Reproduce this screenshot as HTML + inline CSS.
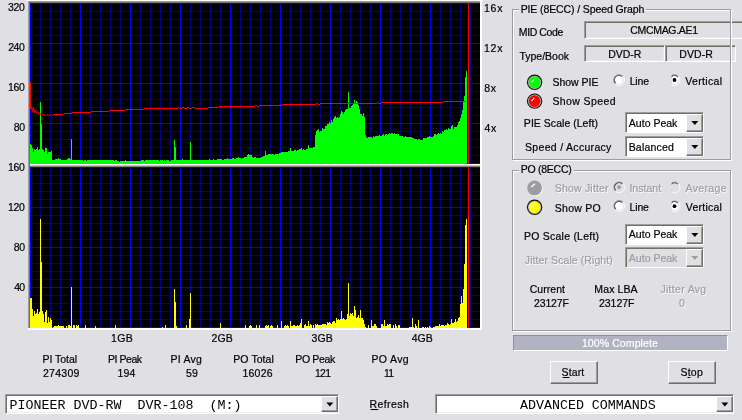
<!DOCTYPE html>
<html><head><meta charset="utf-8"><title>PIE / PO Scan</title>
<style>
html,body{margin:0;padding:0}
body{width:742px;height:420px;overflow:hidden;background:#E0DFE3;position:relative;font-family:"Liberation Sans",sans-serif;font-size:10px;color:#000}
.t{position:absolute;white-space:pre;line-height:12px;font-size:10.5px;-webkit-text-stroke-width:0.2px}
.t.m{font-family:"Liberation Mono",monospace;font-size:13.33px;line-height:16px;-webkit-text-stroke-width:0}
.t.d{color:#9D9DA1;text-shadow:0.8px 0.8px 0 #FFFFFF}
.t.d2{color:#9D9DA1}
.sk{position:absolute;box-sizing:border-box;border-style:solid;border-width:1px;border-color:#9D9DA1 #FFFFFF #FFFFFF #9D9DA1;box-shadow:inset 1px 1px 0 #716F64, inset -1px -1px 0 #E9E8EC}
.sk2{position:absolute;box-sizing:border-box;border-style:solid;border-width:1px;border-color:#9D9DA1 #FFFFFF #FFFFFF #9D9DA1;box-shadow:inset 1px 1px 0 #716F64}
.btn{position:absolute;box-sizing:border-box;background:#E0DFE3;border-style:solid;border-width:1px;border-color:#FFFFFF #716F64 #716F64 #FFFFFF;box-shadow:inset -1px -1px 0 #9D9DA1}
.pbtn{position:absolute;box-sizing:border-box;background:#E0DFE3;border-style:solid;border-width:1px;border-color:#FFFFFF #716F64 #716F64 #FFFFFF;box-shadow:inset -1px -1px 0 #9D9DA1}
.grp{position:absolute;box-sizing:border-box;border:1px solid #9D9DA1;box-shadow:1px 1px 0 #FFFFFF, inset 1px 1px 0 #FFFFFF}
</style></head><body>
<svg width="742" height="420" viewBox="0 0 742 420" style="position:absolute;left:0;top:0">
<g shape-rendering="crispEdges">
<rect x="26" y="0" width="457" height="1" fill="#FFFFFF"/>
<rect x="28" y="1" width="454" height="329" fill="#9D9DA1"/>
<rect x="29" y="2" width="453" height="328" fill="#716F64"/>
<rect x="30" y="1" width="452" height="329" fill="none"/>
<rect x="480" y="1" width="2" height="329" fill="#FFFFFF"/>
<rect x="28" y="328" width="454" height="2" fill="#FFFFFF"/>
<rect x="30" y="3" width="450" height="325" fill="#000000"/>
<rect x="30" y="3" width="1" height="161" fill="#0000FF"/><rect x="30" y="167" width="1" height="161" fill="#0000FF"/><rect x="40" y="3" width="1" height="161" fill="#00008C"/><rect x="40" y="167" width="1" height="161" fill="#00008C"/><rect x="50" y="3" width="1" height="161" fill="#00008C"/><rect x="50" y="167" width="1" height="161" fill="#00008C"/><rect x="60" y="3" width="1" height="161" fill="#00008C"/><rect x="60" y="167" width="1" height="161" fill="#00008C"/><rect x="70" y="3" width="1" height="161" fill="#00008C"/><rect x="70" y="167" width="1" height="161" fill="#00008C"/><rect x="80" y="3" width="1" height="161" fill="#0000FF"/><rect x="80" y="167" width="1" height="161" fill="#0000FF"/><rect x="90" y="3" width="1" height="161" fill="#00008C"/><rect x="90" y="167" width="1" height="161" fill="#00008C"/><rect x="100" y="3" width="1" height="161" fill="#00008C"/><rect x="100" y="167" width="1" height="161" fill="#00008C"/><rect x="110" y="3" width="1" height="161" fill="#00008C"/><rect x="110" y="167" width="1" height="161" fill="#00008C"/><rect x="120" y="3" width="1" height="161" fill="#00008C"/><rect x="120" y="167" width="1" height="161" fill="#00008C"/><rect x="130" y="3" width="1" height="161" fill="#0000FF"/><rect x="130" y="167" width="1" height="161" fill="#0000FF"/><rect x="140" y="3" width="1" height="161" fill="#00008C"/><rect x="140" y="167" width="1" height="161" fill="#00008C"/><rect x="150" y="3" width="1" height="161" fill="#00008C"/><rect x="150" y="167" width="1" height="161" fill="#00008C"/><rect x="160" y="3" width="1" height="161" fill="#00008C"/><rect x="160" y="167" width="1" height="161" fill="#00008C"/><rect x="170" y="3" width="1" height="161" fill="#00008C"/><rect x="170" y="167" width="1" height="161" fill="#00008C"/><rect x="180" y="3" width="1" height="161" fill="#0000FF"/><rect x="180" y="167" width="1" height="161" fill="#0000FF"/><rect x="190" y="3" width="1" height="161" fill="#00008C"/><rect x="190" y="167" width="1" height="161" fill="#00008C"/><rect x="200" y="3" width="1" height="161" fill="#00008C"/><rect x="200" y="167" width="1" height="161" fill="#00008C"/><rect x="210" y="3" width="1" height="161" fill="#00008C"/><rect x="210" y="167" width="1" height="161" fill="#00008C"/><rect x="220" y="3" width="1" height="161" fill="#00008C"/><rect x="220" y="167" width="1" height="161" fill="#00008C"/><rect x="230" y="3" width="1" height="161" fill="#0000FF"/><rect x="230" y="167" width="1" height="161" fill="#0000FF"/><rect x="240" y="3" width="1" height="161" fill="#00008C"/><rect x="240" y="167" width="1" height="161" fill="#00008C"/><rect x="250" y="3" width="1" height="161" fill="#00008C"/><rect x="250" y="167" width="1" height="161" fill="#00008C"/><rect x="260" y="3" width="1" height="161" fill="#00008C"/><rect x="260" y="167" width="1" height="161" fill="#00008C"/><rect x="270" y="3" width="1" height="161" fill="#00008C"/><rect x="270" y="167" width="1" height="161" fill="#00008C"/><rect x="280" y="3" width="1" height="161" fill="#0000FF"/><rect x="280" y="167" width="1" height="161" fill="#0000FF"/><rect x="290" y="3" width="1" height="161" fill="#00008C"/><rect x="290" y="167" width="1" height="161" fill="#00008C"/><rect x="300" y="3" width="1" height="161" fill="#00008C"/><rect x="300" y="167" width="1" height="161" fill="#00008C"/><rect x="310" y="3" width="1" height="161" fill="#00008C"/><rect x="310" y="167" width="1" height="161" fill="#00008C"/><rect x="320" y="3" width="1" height="161" fill="#00008C"/><rect x="320" y="167" width="1" height="161" fill="#00008C"/><rect x="330" y="3" width="1" height="161" fill="#0000FF"/><rect x="330" y="167" width="1" height="161" fill="#0000FF"/><rect x="340" y="3" width="1" height="161" fill="#00008C"/><rect x="340" y="167" width="1" height="161" fill="#00008C"/><rect x="350" y="3" width="1" height="161" fill="#00008C"/><rect x="350" y="167" width="1" height="161" fill="#00008C"/><rect x="360" y="3" width="1" height="161" fill="#00008C"/><rect x="360" y="167" width="1" height="161" fill="#00008C"/><rect x="370" y="3" width="1" height="161" fill="#00008C"/><rect x="370" y="167" width="1" height="161" fill="#00008C"/><rect x="380" y="3" width="1" height="161" fill="#0000FF"/><rect x="380" y="167" width="1" height="161" fill="#0000FF"/><rect x="390" y="3" width="1" height="161" fill="#00008C"/><rect x="390" y="167" width="1" height="161" fill="#00008C"/><rect x="400" y="3" width="1" height="161" fill="#00008C"/><rect x="400" y="167" width="1" height="161" fill="#00008C"/><rect x="410" y="3" width="1" height="161" fill="#00008C"/><rect x="410" y="167" width="1" height="161" fill="#00008C"/><rect x="420" y="3" width="1" height="161" fill="#00008C"/><rect x="420" y="167" width="1" height="161" fill="#00008C"/><rect x="430" y="3" width="1" height="161" fill="#0000FF"/><rect x="430" y="167" width="1" height="161" fill="#0000FF"/><rect x="440" y="3" width="1" height="161" fill="#00008C"/><rect x="440" y="167" width="1" height="161" fill="#00008C"/><rect x="450" y="3" width="1" height="161" fill="#00008C"/><rect x="450" y="167" width="1" height="161" fill="#00008C"/><rect x="460" y="3" width="1" height="161" fill="#00008C"/><rect x="460" y="167" width="1" height="161" fill="#00008C"/><rect x="470" y="3" width="1" height="161" fill="#00008C"/><rect x="470" y="167" width="1" height="161" fill="#00008C"/><rect x="30" y="3" width="450" height="1" fill="#0000FF"/><rect x="30" y="167" width="450" height="1" fill="#0000FF"/><rect x="30" y="11" width="450" height="1" fill="#00008C"/><rect x="30" y="175" width="450" height="1" fill="#00008C"/><rect x="30" y="19" width="450" height="1" fill="#00008C"/><rect x="30" y="183" width="450" height="1" fill="#00008C"/><rect x="30" y="27" width="450" height="1" fill="#00008C"/><rect x="30" y="191" width="450" height="1" fill="#00008C"/><rect x="30" y="35" width="450" height="1" fill="#00008C"/><rect x="30" y="199" width="450" height="1" fill="#00008C"/><rect x="30" y="43" width="450" height="1" fill="#0000FF"/><rect x="30" y="207" width="450" height="1" fill="#0000FF"/><rect x="30" y="51" width="450" height="1" fill="#00008C"/><rect x="30" y="215" width="450" height="1" fill="#00008C"/><rect x="30" y="59" width="450" height="1" fill="#00008C"/><rect x="30" y="223" width="450" height="1" fill="#00008C"/><rect x="30" y="67" width="450" height="1" fill="#00008C"/><rect x="30" y="231" width="450" height="1" fill="#00008C"/><rect x="30" y="75" width="450" height="1" fill="#00008C"/><rect x="30" y="239" width="450" height="1" fill="#00008C"/><rect x="30" y="83" width="450" height="1" fill="#0000FF"/><rect x="30" y="247" width="450" height="1" fill="#0000FF"/><rect x="30" y="91" width="450" height="1" fill="#00008C"/><rect x="30" y="255" width="450" height="1" fill="#00008C"/><rect x="30" y="99" width="450" height="1" fill="#00008C"/><rect x="30" y="263" width="450" height="1" fill="#00008C"/><rect x="30" y="107" width="450" height="1" fill="#00008C"/><rect x="30" y="271" width="450" height="1" fill="#00008C"/><rect x="30" y="115" width="450" height="1" fill="#00008C"/><rect x="30" y="279" width="450" height="1" fill="#00008C"/><rect x="30" y="123" width="450" height="1" fill="#0000FF"/><rect x="30" y="287" width="450" height="1" fill="#0000FF"/><rect x="30" y="131" width="450" height="1" fill="#00008C"/><rect x="30" y="295" width="450" height="1" fill="#00008C"/><rect x="30" y="139" width="450" height="1" fill="#00008C"/><rect x="30" y="303" width="450" height="1" fill="#00008C"/><rect x="30" y="147" width="450" height="1" fill="#00008C"/><rect x="30" y="311" width="450" height="1" fill="#00008C"/><rect x="30" y="155" width="450" height="1" fill="#00008C"/><rect x="30" y="319" width="450" height="1" fill="#00008C"/><rect x="30" y="163" width="450" height="1" fill="#0000FF"/><rect x="30" y="327" width="450" height="1" fill="#0000FF"/><rect x="30" y="3" width="1" height="161" fill="#0000FF"/><rect x="30" y="167" width="1" height="161" fill="#0000FF"/><rect x="80" y="3" width="1" height="161" fill="#0000FF"/><rect x="80" y="167" width="1" height="161" fill="#0000FF"/><rect x="130" y="3" width="1" height="161" fill="#0000FF"/><rect x="130" y="167" width="1" height="161" fill="#0000FF"/><rect x="180" y="3" width="1" height="161" fill="#0000FF"/><rect x="180" y="167" width="1" height="161" fill="#0000FF"/><rect x="230" y="3" width="1" height="161" fill="#0000FF"/><rect x="230" y="167" width="1" height="161" fill="#0000FF"/><rect x="280" y="3" width="1" height="161" fill="#0000FF"/><rect x="280" y="167" width="1" height="161" fill="#0000FF"/><rect x="330" y="3" width="1" height="161" fill="#0000FF"/><rect x="330" y="167" width="1" height="161" fill="#0000FF"/><rect x="380" y="3" width="1" height="161" fill="#0000FF"/><rect x="380" y="167" width="1" height="161" fill="#0000FF"/><rect x="430" y="3" width="1" height="161" fill="#0000FF"/><rect x="430" y="167" width="1" height="161" fill="#0000FF"/>
<path d="M30 144h1V164h-1zM31 145h1V164h-1zM32 148h1V164h-1zM33 152h1V164h-1zM34 149h1V164h-1zM35 150h1V164h-1zM36 149h1V164h-1zM37 147h1V164h-1zM38 150h1V164h-1zM39 149h1V164h-1zM40 102h1V164h-1zM41 124h1V164h-1zM42 149h1V164h-1zM43 150h1V164h-1zM44 152h1V164h-1zM45 148h1V164h-1zM46 148h1V164h-1zM47 154h1V164h-1zM48 152h1V164h-1zM49 152h1V164h-1zM50 152h1V164h-1zM51 151h1V164h-1zM52 160h1V164h-1zM53 160h1V164h-1zM54 160h1V164h-1zM55 159h1V164h-1zM56 159h1V164h-1zM57 159h1V164h-1zM58 158h1V164h-1zM59 159h1V164h-1zM60 159h1V164h-1zM61 160h1V164h-1zM62 160h1V164h-1zM63 160h1V164h-1zM64 160h1V164h-1zM65 160h1V164h-1zM66 160h1V164h-1zM67 159h1V164h-1zM68 158h1V164h-1zM69 158h1V164h-1zM70 159h1V164h-1zM71 139h1V164h-1zM72 160h1V164h-1zM73 160h1V164h-1zM74 160h1V164h-1zM75 160h1V164h-1zM76 160h1V164h-1zM77 160h1V164h-1zM78 160h1V164h-1zM79 160h1V164h-1zM80 160h1V164h-1zM81 160h1V164h-1zM82 160h1V164h-1zM83 161h1V164h-1zM84 160h1V164h-1zM85 160h1V164h-1zM86 161h1V164h-1zM87 160h1V164h-1zM88 160h1V164h-1zM89 160h1V164h-1zM90 160h1V164h-1zM91 160h1V164h-1zM92 160h1V164h-1zM93 160h1V164h-1zM94 160h1V164h-1zM95 160h1V164h-1zM96 160h1V164h-1zM97 160h1V164h-1zM98 160h1V164h-1zM99 160h1V164h-1zM100 160h1V164h-1zM101 160h1V164h-1zM102 160h1V164h-1zM103 160h1V164h-1zM104 160h1V164h-1zM105 160h1V164h-1zM106 160h1V164h-1zM107 160h1V164h-1zM108 160h1V164h-1zM109 160h1V164h-1zM110 160h1V164h-1zM111 160h1V164h-1zM112 160h1V164h-1zM113 160h1V164h-1zM114 161h1V164h-1zM115 160h1V164h-1zM116 160h1V164h-1zM117 161h1V164h-1zM118 161h1V164h-1zM119 162h1V164h-1zM120 161h1V164h-1zM121 161h1V164h-1zM122 161h1V164h-1zM123 161h1V164h-1zM124 161h1V164h-1zM125 160h1V164h-1zM126 161h1V164h-1zM127 161h1V164h-1zM128 161h1V164h-1zM129 161h1V164h-1zM130 161h1V164h-1zM131 161h1V164h-1zM132 161h1V164h-1zM133 161h1V164h-1zM134 161h1V164h-1zM135 161h1V164h-1zM136 161h1V164h-1zM137 161h1V164h-1zM138 161h1V164h-1zM139 161h1V164h-1zM140 161h1V164h-1zM141 160h1V164h-1zM142 160h1V164h-1zM143 160h1V164h-1zM144 161h1V164h-1zM145 160h1V164h-1zM146 160h1V164h-1zM147 160h1V164h-1zM148 160h1V164h-1zM149 160h1V164h-1zM150 160h1V164h-1zM151 160h1V164h-1zM152 160h1V164h-1zM153 160h1V164h-1zM154 160h1V164h-1zM155 160h1V164h-1zM156 160h1V164h-1zM157 160h1V164h-1zM158 160h1V164h-1zM159 161h1V164h-1zM160 160h1V164h-1zM161 160h1V164h-1zM162 160h1V164h-1zM163 161h1V164h-1zM164 160h1V164h-1zM165 161h1V164h-1zM166 160h1V164h-1zM167 160h1V164h-1zM168 160h1V164h-1zM169 161h1V164h-1zM170 161h1V164h-1zM171 160h1V164h-1zM172 160h1V164h-1zM173 160h1V164h-1zM174 140h1V164h-1zM175 147h1V164h-1zM176 160h1V164h-1zM177 160h1V164h-1zM178 160h1V164h-1zM179 160h1V164h-1zM180 160h1V164h-1zM181 160h1V164h-1zM182 159h1V164h-1zM183 160h1V164h-1zM184 160h1V164h-1zM185 160h1V164h-1zM186 160h1V164h-1zM187 160h1V164h-1zM188 160h1V164h-1zM189 160h1V164h-1zM190 142h1V164h-1zM191 160h1V164h-1zM192 160h1V164h-1zM193 160h1V164h-1zM194 160h1V164h-1zM195 160h1V164h-1zM196 160h1V164h-1zM197 160h1V164h-1zM198 160h1V164h-1zM199 160h1V164h-1zM200 160h1V164h-1zM201 160h1V164h-1zM202 160h1V164h-1zM203 160h1V164h-1zM204 160h1V164h-1zM205 160h1V164h-1zM206 160h1V164h-1zM207 160h1V164h-1zM208 160h1V164h-1zM209 159h1V164h-1zM210 160h1V164h-1zM211 160h1V164h-1zM212 160h1V164h-1zM213 159h1V164h-1zM214 160h1V164h-1zM215 160h1V164h-1zM216 160h1V164h-1zM217 159h1V164h-1zM218 159h1V164h-1zM219 159h1V164h-1zM220 159h1V164h-1zM221 159h1V164h-1zM222 160h1V164h-1zM223 160h1V164h-1zM224 159h1V164h-1zM225 159h1V164h-1zM226 159h1V164h-1zM227 158h1V164h-1zM228 159h1V164h-1zM229 159h1V164h-1zM230 159h1V164h-1zM231 159h1V164h-1zM232 158h1V164h-1zM233 158h1V164h-1zM234 159h1V164h-1zM235 159h1V164h-1zM236 158h1V164h-1zM237 158h1V164h-1zM238 157h1V164h-1zM239 158h1V164h-1zM240 158h1V164h-1zM241 159h1V164h-1zM242 158h1V164h-1zM243 158h1V164h-1zM244 157h1V164h-1zM245 157h1V164h-1zM246 157h1V164h-1zM247 155h1V164h-1zM248 154h1V164h-1zM249 155h1V164h-1zM250 155h1V164h-1zM251 155h1V164h-1zM252 157h1V164h-1zM253 158h1V164h-1zM254 157h1V164h-1zM255 157h1V164h-1zM256 158h1V164h-1zM257 158h1V164h-1zM258 158h1V164h-1zM259 158h1V164h-1zM260 158h1V164h-1zM261 157h1V164h-1zM262 157h1V164h-1zM263 156h1V164h-1zM264 156h1V164h-1zM265 151h1V164h-1zM266 155h1V164h-1zM267 155h1V164h-1zM268 154h1V164h-1zM269 154h1V164h-1zM270 154h1V164h-1zM271 154h1V164h-1zM272 154h1V164h-1zM273 154h1V164h-1zM274 155h1V164h-1zM275 154h1V164h-1zM276 154h1V164h-1zM277 154h1V164h-1zM278 154h1V164h-1zM279 153h1V164h-1zM280 153h1V164h-1zM281 152h1V164h-1zM282 152h1V164h-1zM283 152h1V164h-1zM284 152h1V164h-1zM285 152h1V164h-1zM286 152h1V164h-1zM287 152h1V164h-1zM288 151h1V164h-1zM289 151h1V164h-1zM290 148h1V164h-1zM291 151h1V164h-1zM292 151h1V164h-1zM293 151h1V164h-1zM294 150h1V164h-1zM295 150h1V164h-1zM296 151h1V164h-1zM297 150h1V164h-1zM298 150h1V164h-1zM299 149h1V164h-1zM300 149h1V164h-1zM301 148h1V164h-1zM302 150h1V164h-1zM303 149h1V164h-1zM304 150h1V164h-1zM305 150h1V164h-1zM306 149h1V164h-1zM307 149h1V164h-1zM308 145h1V164h-1zM309 148h1V164h-1zM310 148h1V164h-1zM311 148h1V164h-1zM312 148h1V164h-1zM313 147h1V164h-1zM314 147h1V164h-1zM315 135h1V164h-1zM316 131h1V164h-1zM317 130h1V164h-1zM318 129h1V164h-1zM319 132h1V164h-1zM320 131h1V164h-1zM321 131h1V164h-1zM322 128h1V164h-1zM323 129h1V164h-1zM324 129h1V164h-1zM325 126h1V164h-1zM326 126h1V164h-1zM327 124h1V164h-1zM328 124h1V164h-1zM329 122h1V164h-1zM330 123h1V164h-1zM331 120h1V164h-1zM332 122h1V164h-1zM333 119h1V164h-1zM334 117h1V164h-1zM335 116h1V164h-1zM336 118h1V164h-1zM337 117h1V164h-1zM338 118h1V164h-1zM339 117h1V164h-1zM340 114h1V164h-1zM341 111h1V164h-1zM342 112h1V164h-1zM343 114h1V164h-1zM344 112h1V164h-1zM345 110h1V164h-1zM346 109h1V164h-1zM347 109h1V164h-1zM348 92h1V164h-1zM349 108h1V164h-1zM350 108h1V164h-1zM351 106h1V164h-1zM352 105h1V164h-1zM353 103h1V164h-1zM354 100h1V164h-1zM355 104h1V164h-1zM356 101h1V164h-1zM357 102h1V164h-1zM358 105h1V164h-1zM359 109h1V164h-1zM360 114h1V164h-1zM361 114h1V164h-1zM362 116h1V164h-1zM363 113h1V164h-1zM364 117h1V164h-1zM365 135h1V164h-1zM366 137h1V164h-1zM367 138h1V164h-1zM368 137h1V164h-1zM369 137h1V164h-1zM370 137h1V164h-1zM371 137h1V164h-1zM372 138h1V164h-1zM373 136h1V164h-1zM374 137h1V164h-1zM375 136h1V164h-1zM376 136h1V164h-1zM377 136h1V164h-1zM378 136h1V164h-1zM379 135h1V164h-1zM380 136h1V164h-1zM381 136h1V164h-1zM382 135h1V164h-1zM383 134h1V164h-1zM384 136h1V164h-1zM385 134h1V164h-1zM386 134h1V164h-1zM387 135h1V164h-1zM388 134h1V164h-1zM389 133h1V164h-1zM390 134h1V164h-1zM391 133h1V164h-1zM392 133h1V164h-1zM393 134h1V164h-1zM394 133h1V164h-1zM395 134h1V164h-1zM396 134h1V164h-1zM397 134h1V164h-1zM398 134h1V164h-1zM399 136h1V164h-1zM400 136h1V164h-1zM401 136h1V164h-1zM402 136h1V164h-1zM403 137h1V164h-1zM404 137h1V164h-1zM405 136h1V164h-1zM406 137h1V164h-1zM407 137h1V164h-1zM408 137h1V164h-1zM409 137h1V164h-1zM410 137h1V164h-1zM411 137h1V164h-1zM412 138h1V164h-1zM413 138h1V164h-1zM414 139h1V164h-1zM415 139h1V164h-1zM416 139h1V164h-1zM417 140h1V164h-1zM418 139h1V164h-1zM419 139h1V164h-1zM420 140h1V164h-1zM421 140h1V164h-1zM422 140h1V164h-1zM423 138h1V164h-1zM424 138h1V164h-1zM425 138h1V164h-1zM426 138h1V164h-1zM427 137h1V164h-1zM428 137h1V164h-1zM429 136h1V164h-1zM430 137h1V164h-1zM431 137h1V164h-1zM432 137h1V164h-1zM433 136h1V164h-1zM434 134h1V164h-1zM435 134h1V164h-1zM436 135h1V164h-1zM437 134h1V164h-1zM438 133h1V164h-1zM439 134h1V164h-1zM440 133h1V164h-1zM441 134h1V164h-1zM442 131h1V164h-1zM443 132h1V164h-1zM444 130h1V164h-1zM445 130h1V164h-1zM446 129h1V164h-1zM447 130h1V164h-1zM448 128h1V164h-1zM449 129h1V164h-1zM450 129h1V164h-1zM451 126h1V164h-1zM452 125h1V164h-1zM453 129h1V164h-1zM454 127h1V164h-1zM455 127h1V164h-1zM456 127h1V164h-1zM457 125h1V164h-1zM458 122h1V164h-1zM459 121h1V164h-1zM460 118h1V164h-1zM461 114h1V164h-1zM462 110h1V164h-1zM463 101h1V164h-1zM464 96h1V164h-1zM465 77h1V164h-1zM466 71h1V164h-1z" fill="#00FF00"/>
<path d="M30 298h1V328h-1zM31 298h1V328h-1zM32 309h1V328h-1zM33 316h1V328h-1zM34 311h1V328h-1zM35 314h1V328h-1zM36 313h1V328h-1zM37 309h1V328h-1zM38 314h1V328h-1zM39 312h1V328h-1zM40 219h1V328h-1zM41 262h1V328h-1zM42 311h1V328h-1zM43 314h1V328h-1zM44 322h1V328h-1zM45 312h1V328h-1zM46 310h1V328h-1zM47 323h1V328h-1zM48 317h1V328h-1zM49 322h1V328h-1zM50 318h1V328h-1zM51 320h1V328h-1zM53 327h1V328h-1zM54 326h1V328h-1zM55 326h1V328h-1zM56 326h1V328h-1zM57 326h1V328h-1zM58 325h1V328h-1zM59 326h1V328h-1zM60 326h1V328h-1zM61 326h1V328h-1zM62 326h1V328h-1zM63 326h1V328h-1zM66 326h1V328h-1zM68 325h1V328h-1zM69 325h1V328h-1zM70 326h1V328h-1zM71 287h1V328h-1zM73 325h1V328h-1zM74 325h1V328h-1zM76 325h1V328h-1zM77 326h1V328h-1zM78 325h1V328h-1zM85 325h1V328h-1zM95 326h1V328h-1zM115 325h1V328h-1zM162 327h1V328h-1zM165 325h1V328h-1zM174 289h1V328h-1zM175 302h1V328h-1zM176 326h1V328h-1zM186 325h1V328h-1zM189 319h1V328h-1zM190 293h1V328h-1zM220 323h1V328h-1zM245 325h1V328h-1zM249 326h1V328h-1zM250 325h1V328h-1zM251 326h1V328h-1zM256 325h1V328h-1zM259 325h1V328h-1zM265 326h1V328h-1zM266 325h1V328h-1zM267 326h1V328h-1zM268 325h1V328h-1zM270 326h1V328h-1zM271 325h1V328h-1zM272 326h1V328h-1zM277 325h1V328h-1zM281 321h1V328h-1zM284 326h1V328h-1zM285 325h1V328h-1zM286 326h1V328h-1zM287 325h1V328h-1zM288 326h1V328h-1zM290 321h1V328h-1zM291 326h1V328h-1zM292 326h1V328h-1zM293 325h1V328h-1zM294 325h1V328h-1zM295 326h1V328h-1zM296 326h1V328h-1zM297 325h1V328h-1zM298 326h1V328h-1zM299 325h1V328h-1zM300 323h1V328h-1zM301 319h1V328h-1zM304 325h1V328h-1zM305 324h1V328h-1zM306 326h1V328h-1zM307 326h1V328h-1zM308 321h1V328h-1zM309 326h1V328h-1zM310 324h1V328h-1zM311 325h1V328h-1zM313 325h1V328h-1zM315 324h1V328h-1zM316 325h1V328h-1zM317 324h1V328h-1zM318 325h1V328h-1zM319 325h1V328h-1zM320 325h1V328h-1zM321 325h1V328h-1zM322 324h1V328h-1zM323 324h1V328h-1zM324 324h1V328h-1zM325 324h1V328h-1zM326 325h1V328h-1zM327 322h1V328h-1zM328 323h1V328h-1zM329 322h1V328h-1zM330 323h1V328h-1zM331 324h1V328h-1zM332 322h1V328h-1zM333 321h1V328h-1zM334 321h1V328h-1zM335 323h1V328h-1zM336 318h1V328h-1zM337 320h1V328h-1zM338 319h1V328h-1zM339 320h1V328h-1zM340 319h1V328h-1zM341 311h1V328h-1zM342 319h1V328h-1zM343 318h1V328h-1zM344 319h1V328h-1zM345 320h1V328h-1zM346 319h1V328h-1zM347 314h1V328h-1zM348 283h1V328h-1zM349 316h1V328h-1zM350 313h1V328h-1zM351 314h1V328h-1zM352 313h1V328h-1zM353 316h1V328h-1zM354 306h1V328h-1zM355 310h1V328h-1zM356 318h1V328h-1zM357 317h1V328h-1zM358 315h1V328h-1zM359 318h1V328h-1zM360 310h1V328h-1zM361 318h1V328h-1zM362 318h1V328h-1zM363 320h1V328h-1zM364 324h1V328h-1zM365 327h1V328h-1zM368 325h1V328h-1zM371 320h1V328h-1zM372 326h1V328h-1zM373 326h1V328h-1zM374 324h1V328h-1zM375 324h1V328h-1zM376 326h1V328h-1zM381 324h1V328h-1zM382 324h1V328h-1zM383 326h1V328h-1zM384 320h1V328h-1zM385 326h1V328h-1zM386 326h1V328h-1zM387 324h1V328h-1zM388 325h1V328h-1zM389 324h1V328h-1zM390 324h1V328h-1zM393 325h1V328h-1zM395 324h1V328h-1zM396 326h1V328h-1zM398 325h1V328h-1zM399 325h1V328h-1zM409 327h1V328h-1zM410 327h1V328h-1zM411 327h1V328h-1zM412 318h1V328h-1zM413 327h1V328h-1zM415 324h1V328h-1zM416 326h1V328h-1zM418 320h1V328h-1zM422 327h1V328h-1zM423 327h1V328h-1zM425 327h1V328h-1zM427 327h1V328h-1zM429 326h1V328h-1zM430 327h1V328h-1zM433 327h1V328h-1zM434 327h1V328h-1zM435 326h1V328h-1zM436 326h1V328h-1zM437 326h1V328h-1zM438 326h1V328h-1zM439 324h1V328h-1zM440 326h1V328h-1zM441 325h1V328h-1zM442 325h1V328h-1zM443 325h1V328h-1zM444 326h1V328h-1zM445 325h1V328h-1zM446 325h1V328h-1zM447 323h1V328h-1zM448 324h1V328h-1zM449 325h1V328h-1zM450 324h1V328h-1zM451 319h1V328h-1zM452 323h1V328h-1zM453 323h1V328h-1zM454 322h1V328h-1zM455 319h1V328h-1zM456 322h1V328h-1zM457 321h1V328h-1zM458 318h1V328h-1zM459 317h1V328h-1zM460 304h1V328h-1zM461 296h1V328h-1zM462 303h1V328h-1zM463 289h1V328h-1zM464 264h1V328h-1zM465 225h1V328h-1zM466 219h1V328h-1z" fill="#FFFF00"/>
<rect x="30" y="164" width="450" height="1" fill="#FFFFFF"/>
<rect x="30" y="165" width="450" height="1" fill="#C8C6C4"/>
<rect x="30" y="166" width="450" height="1" fill="#807E76"/>
<rect x="468" y="3" width="1" height="161" fill="#FF0000"/>
<rect x="468" y="167" width="1" height="161" fill="#FF0000"/>
<path d="M30 82h1v27h-1zM52 115h1v1h-1zM53 114h10v1h-10zM63 113h9v1h-9zM72 112h19v1h-19zM91 111h18v1h-18zM109 110h16v1h-16zM125 109h19v1h-19zM144 108h34v1h-34zM178 107h1v1h-1zM179 108h3v1h-3zM182 107h2v1h-2zM184 108h3v1h-3zM187 107h2v1h-2zM189 108h3v1h-3zM192 107h3v1h-3zM195 108h13v1h-13zM208 107h10v1h-10zM218 106h37v1h-37zM255 105h2v1h-2zM257 106h2v1h-2zM259 105h23v1h-23zM282 104h34v1h-34zM316 103h2v1h-2zM318 104h2v1h-2zM320 103h57v1h-57zM377 102h1v1h-1zM378 103h3v1h-3zM381 102h62v1h-62zM443 101h23v1h-23z" fill="#FF0000"/>
</g>
<polyline points="30.5,108 30.5,108.5 31.5,106.5 32.5,111.5 33.5,107.5 34.5,112.5 35.5,109.5 36.5,113.5 37.5,111.5 38.5,114.5 39.5,112.5 40.5,114.5 41.5,113.5 42.5,115.5 43.5,114.5 44.5,114.5 45.5,115.5 46.5,115.5 47.5,114.5 48.5,114.5 49.5,115.5 50.5,115.5 51.5,114.5 52.5,115.5" fill="none" stroke="#FF0000" stroke-width="1"/>
</svg>
<div class="sk" style="left:584px;top:21px;width:170px;height:18px;background:#E0DFE3"></div><div class="sk" style="left:584px;top:45px;width:81px;height:17px;background:#E0DFE3"></div><div class="sk" style="left:665px;top:45px;width:71px;height:17px;background:#E0DFE3"></div><div class="grp" style="left:512px;top:9px;width:219px;height:151px"></div><div class="grp" style="left:512px;top:170px;width:219px;height:161px"></div><svg style="position:absolute;left:524px;top:72px" width="20" height="20" viewBox="-10.60 -10.30 20 20"><circle cx="0" cy="0" r="7.7" fill="#111111"/><circle cx="0" cy="0" r="6.6" fill="#B4B4B8"/><circle cx="0" cy="0" r="5.8" fill="#00FF00"/><path d="M-3.3 0L-0.3 -3" stroke="#FFFFFF" stroke-width="1.2" fill="none"/></svg><svg style="position:absolute;left:524px;top:91px" width="20" height="20" viewBox="-10.60 -10.10 20 20"><circle cx="0" cy="0" r="7.7" fill="#111111"/><circle cx="0" cy="0" r="6.6" fill="#B4B4B8"/><circle cx="0" cy="0" r="5.8" fill="#FF0000"/><path d="M-3.3 0L-0.3 -3" stroke="#FFFFFF" stroke-width="1.2" fill="none"/></svg><svg style="position:absolute;left:524px;top:177px" width="20" height="20" viewBox="-10.60 -10.90 20 20"><circle cx="0.8" cy="0.8" r="7.4" fill="#FFFFFF"/><circle cx="0" cy="0" r="7.4" fill="#9D9DA1"/><path d="M-3.2 -0.8L0.2 -4.2" stroke="#FFFFFF" stroke-width="1.4" fill="none"/></svg><svg style="position:absolute;left:524px;top:197px" width="20" height="20" viewBox="-10.60 -10.30 20 20"><circle cx="0" cy="0" r="7.7" fill="#111111"/><circle cx="0" cy="0" r="6.6" fill="#B4B4B8"/><circle cx="0" cy="0" r="5.8" fill="#FFFF00"/><path d="M-3.3 0L-0.3 -3" stroke="#FFFFFF" stroke-width="1.2" fill="none"/></svg><svg style="position:absolute;left:610px;top:71px" width="16" height="16" viewBox="-8.90 -8.90 16 16"><circle r="4.0" fill="#FFFFFF"/><path d="M3.89 -3.89A5.5 5.5 0 0 1 -3.89 3.89" stroke="#FFFFFF" stroke-width="0.9" fill="none"/><path d="M-3.92 3.92A5.55 5.55 0 0 1 3.92 -3.92" stroke="#A5A39C" stroke-width="0.8" fill="none"/><path d="M-3.22 3.22A4.55 4.55 0 0 1 3.22 -3.22" stroke="#5E5B50" stroke-width="1.25" fill="none"/></svg><svg style="position:absolute;left:666px;top:72px" width="16" height="16" viewBox="-8.50 -8.00 16 16"><clipPath id="c6745_800"><rect x="-2.90" y="-8" width="16" height="16"/></clipPath><g clip-path="url(#c6745_800)"><circle r="4.0" fill="#FFFFFF"/><path d="M3.89 -3.89A5.5 5.5 0 0 1 -3.89 3.89" stroke="#FFFFFF" stroke-width="0.9" fill="none"/><path d="M-3.92 3.92A5.55 5.55 0 0 1 3.92 -3.92" stroke="#A5A39C" stroke-width="0.8" fill="none"/><path d="M-3.22 3.22A4.55 4.55 0 0 1 3.22 -3.22" stroke="#5E5B50" stroke-width="1.25" fill="none"/><circle r="1.9" fill="#000000"/></g></svg><svg style="position:absolute;left:611px;top:179px" width="16" height="16" viewBox="-8.10 -8.20 16 16"><circle r="4.0" fill="#E0DFE3"/><path d="M3.89 -3.89A5.5 5.5 0 0 1 -3.89 3.89" stroke="#FFFFFF" stroke-width="0.9" fill="none"/><path d="M-3.92 3.92A5.55 5.55 0 0 1 3.92 -3.92" stroke="#A5A39C" stroke-width="0.8" fill="none"/><path d="M-3.22 3.22A4.55 4.55 0 0 1 3.22 -3.22" stroke="#5E5B50" stroke-width="1.25" fill="none"/><circle r="1.9" fill="#9D9DA1"/></svg><svg style="position:absolute;left:666px;top:179px" width="16" height="16" viewBox="-8.50 -8.40 16 16"><clipPath id="c6745_1874"><rect x="-2.90" y="-8" width="16" height="16"/></clipPath><g clip-path="url(#c6745_1874)"><circle r="4.0" fill="#E0DFE3"/><path d="M3.89 -3.89A5.5 5.5 0 0 1 -3.89 3.89" stroke="#FFFFFF" stroke-width="0.9" fill="none"/><path d="M-3.92 3.92A5.55 5.55 0 0 1 3.92 -3.92" stroke="#A5A39C" stroke-width="0.8" fill="none"/><path d="M-3.22 3.22A4.55 4.55 0 0 1 3.22 -3.22" stroke="#5E5B50" stroke-width="1.25" fill="none"/></g></svg><svg style="position:absolute;left:611px;top:197px" width="16" height="16" viewBox="-8.10 -8.80 16 16"><circle r="4.0" fill="#FFFFFF"/><path d="M3.89 -3.89A5.5 5.5 0 0 1 -3.89 3.89" stroke="#FFFFFF" stroke-width="0.9" fill="none"/><path d="M-3.92 3.92A5.55 5.55 0 0 1 3.92 -3.92" stroke="#A5A39C" stroke-width="0.8" fill="none"/><path d="M-3.22 3.22A4.55 4.55 0 0 1 3.22 -3.22" stroke="#5E5B50" stroke-width="1.25" fill="none"/></svg><svg style="position:absolute;left:666px;top:198px" width="16" height="16" viewBox="-8.50 -8.20 16 16"><clipPath id="c6745_2062"><rect x="-2.90" y="-8" width="16" height="16"/></clipPath><g clip-path="url(#c6745_2062)"><circle r="4.0" fill="#FFFFFF"/><path d="M3.89 -3.89A5.5 5.5 0 0 1 -3.89 3.89" stroke="#FFFFFF" stroke-width="0.9" fill="none"/><path d="M-3.92 3.92A5.55 5.55 0 0 1 3.92 -3.92" stroke="#A5A39C" stroke-width="0.8" fill="none"/><path d="M-3.22 3.22A4.55 4.55 0 0 1 3.22 -3.22" stroke="#5E5B50" stroke-width="1.25" fill="none"/><circle r="1.9" fill="#000000"/></g></svg><div class="sk2" style="left:625px;top:112px;width:79px;height:21px;background:#FFFFFF;"></div><div class="btn" style="left:686px;top:114px;width:17px;height:18px"></div><svg style="position:absolute;left:690px;top:119px" width="10" height="8" viewBox="-0.8 -1.50 10 8"><path d="M0.5 0.5h7L4 4.5z" fill="#000000"/></svg><div class="sk2" style="left:625px;top:136px;width:79px;height:21px;background:#FFFFFF;"></div><div class="btn" style="left:686px;top:138px;width:17px;height:18px"></div><svg style="position:absolute;left:690px;top:143px" width="10" height="8" viewBox="-0.8 -1.50 10 8"><path d="M0.5 0.5h7L4 4.5z" fill="#000000"/></svg><div class="sk2" style="left:625px;top:224px;width:79px;height:21px;background:#FFFFFF;"></div><div class="btn" style="left:686px;top:226px;width:17px;height:18px"></div><svg style="position:absolute;left:690px;top:231px" width="10" height="8" viewBox="-0.8 -1.50 10 8"><path d="M0.5 0.5h7L4 4.5z" fill="#000000"/></svg><div class="sk2" style="left:625px;top:247px;width:79px;height:21px;background:#E0DFE3;"></div><div class="btn" style="left:686px;top:249px;width:17px;height:18px"></div><svg style="position:absolute;left:690px;top:254px" width="10" height="8" viewBox="-0.8 -1.50 10 8"><path d="M0.5 0.5h7L4 4.5z" fill="#9D9DA1"/></svg><div style="position:absolute;box-sizing:border-box;left:513px;top:335px;width:215px;height:16px;background:#B1B3C2;border-style:solid;border-width:1px;border-color:#8E8E94 #FFFFFF #FFFFFF #8E8E94"></div><svg style="position:absolute;left:369px;top:409px;z-index:5" width="12" height="1" viewBox="0 0 12 1"><rect x="1.60" y="0" width="7.7" height="1" fill="#000"/></svg><svg style="position:absolute;left:561px;top:377px;z-index:5" width="12" height="1" viewBox="0 0 12 1"><rect x="1.60" y="0" width="6.8" height="1" fill="#000"/></svg><svg style="position:absolute;left:686px;top:377px;z-index:5" width="12" height="1" viewBox="0 0 12 1"><rect x="1.50" y="0" width="2.8" height="1" fill="#000"/></svg><div class="pbtn" style="left:550px;top:361px;width:48px;height:23px"></div><div class="pbtn" style="left:668px;top:361px;width:48px;height:23px"></div><div class="sk2" style="left:5px;top:394px;width:334px;height:20px;background:#FFFFFF;box-shadow:inset 1px 1px 0 #716F64, inset 0 -1px 0 #EEEEF1;"></div><div class="btn" style="left:321px;top:396px;width:17px;height:16px"></div><svg style="position:absolute;left:325px;top:401px" width="10" height="8" viewBox="-0.8 -1.10 10 8"><path d="M0.5 0.5h7L4 4.5z" fill="#000000"/></svg><div class="sk2" style="left:435px;top:394px;width:299px;height:20px;background:#FFFFFF;box-shadow:inset 1px 1px 0 #716F64, inset 0 -1px 0 #EEEEF1;"></div><div class="btn" style="left:716px;top:396px;width:17px;height:16px"></div><svg style="position:absolute;left:720px;top:401px" width="10" height="8" viewBox="-0.8 -1.10 10 8"><path d="M0.5 0.5h7L4 4.5z" fill="#000000"/></svg>
<div style="position:absolute;left:0;top:0;width:742px;height:420px;will-change:transform">
<span class="t" id="t0" style="left:8.10px;top:1.26px;letter-spacing:-0.397px;">320</span>
<span class="t" id="t1" style="left:8.23px;top:41.26px;letter-spacing:-0.466px;">240</span>
<span class="t" id="t2" style="left:7.91px;top:81.26px;letter-spacing:-0.306px;">160</span>
<span class="t" id="t3" style="left:13.82px;top:121.26px;letter-spacing:-0.514px;">80</span>
<span class="t" id="t4" style="left:7.91px;top:161.16px;letter-spacing:-0.306px;">160</span>
<span class="t" id="t5" style="left:7.91px;top:201.36px;letter-spacing:-0.306px;">120</span>
<span class="t" id="t6" style="left:13.82px;top:241.36px;letter-spacing:-0.514px;">80</span>
<span class="t" id="t7" style="left:14.20px;top:281.36px;letter-spacing:-0.700px;">40</span>
<span class="t" id="t8" style="left:484.08px;top:2.06px;letter-spacing:0.700px;">16x</span>
<span class="t" id="t9" style="left:484.08px;top:42.06px;letter-spacing:0.700px;">12x</span>
<span class="t" id="t10" style="left:484.18px;top:82.06px;letter-spacing:0.700px;">8x</span>
<span class="t" id="t11" style="left:484.52px;top:122.06px;letter-spacing:0.581px;">4x</span>
<span class="t" id="t12" style="left:110.93px;top:331.86px;letter-spacing:0.422px;">1GB</span>
<span class="t" id="t13" style="left:211.41px;top:331.86px;letter-spacing:0.184px;">2GB</span>
<span class="t" id="t14" style="left:311.51px;top:331.86px;letter-spacing:0.171px;">3GB</span>
<span class="t" id="t15" style="left:411.65px;top:331.86px;letter-spacing:0.085px;">4GB</span>
<span class="t" id="t16" style="left:42.55px;top:353.06px;letter-spacing:-0.051px;">PI Total</span>
<span class="t" id="t17" style="left:42.88px;top:367.26px;letter-spacing:0.291px;">274309</span>
<span class="t" id="t18" style="left:108.02px;top:353.06px;letter-spacing:-0.451px;">PI Peak</span>
<span class="t" id="t19" style="left:117.61px;top:367.26px;letter-spacing:0.109px;">194</span>
<span class="t" id="t20" style="left:170.55px;top:353.06px;letter-spacing:0.221px;">PI Avg</span>
<span class="t" id="t21" style="left:185.99px;top:367.26px;letter-spacing:0.132px;">59</span>
<span class="t" id="t22" style="left:233.32px;top:353.06px;letter-spacing:0.058px;">PO Total</span>
<span class="t" id="t23" style="left:242.38px;top:367.26px;letter-spacing:0.265px;">16026</span>
<span class="t" id="t24" style="left:295.32px;top:353.06px;letter-spacing:-0.353px;">PO Peak</span>
<span class="t" id="t25" style="left:314.93px;top:367.26px;letter-spacing:-0.700px;">121</span>
<span class="t" id="t26" style="left:371.55px;top:353.06px;letter-spacing:0.320px;">PO Avg</span>
<span class="t" id="t27" style="left:383.93px;top:367.26px;letter-spacing:-0.700px;">11</span>
<span class="t m" id="t28" style="left:9.60px;top:397.55px;">PIONEER DVD-RW  DVR-108  (M:)</span>
<span class="t" id="t29" style="left:369.51px;top:398.36px;letter-spacing:0.421px;">Refresh</span>
<span class="t m" id="t30" style="left:519.90px;top:397.55px;">ADVANCED COMMANDS</span>
<span class="t" id="t31" style="left:520.63px;top:3.36px;letter-spacing:-0.105px;background:#E0DFE3;padding:0 2px;margin-left:-2px;">PIE (8ECC) / Speed Graph</span>
<span class="t" id="t32" style="left:518.81px;top:25.96px;letter-spacing:-0.400px;">MID Code</span>
<span class="t" id="t33" style="left:519.39px;top:49.96px;letter-spacing:0.006px;">Type/Book</span>
<span class="t" id="t34" style="left:630.31px;top:23.86px;letter-spacing:-0.317px;">CMCMAG.AE1</span>
<span class="t" id="t35" style="left:608.32px;top:47.86px;letter-spacing:-0.038px;">DVD-R</span>
<span class="t" id="t36" style="left:679.32px;top:47.86px;letter-spacing:0.084px;">DVD-R</span>
<span class="t" id="t37" style="left:552.41px;top:76.36px;letter-spacing:-0.017px;">Show PIE</span>
<span class="t" id="t38" style="left:552.41px;top:95.26px;letter-spacing:0.401px;">Show Speed</span>
<span class="t" id="t39" style="left:629.63px;top:75.26px;letter-spacing:-0.145px;">Line</span>
<span class="t" id="t40" style="left:685.33px;top:75.26px;letter-spacing:0.324px;">Vertical</span>
<span class="t" id="t41" style="left:523.85px;top:117.46px;letter-spacing:0.035px;">PIE Scale (Left)</span>
<span class="t" id="t42" style="left:525.07px;top:141.16px;letter-spacing:0.303px;">Speed / Accuracy</span>
<span class="t" id="t43" style="left:628.85px;top:116.76px;letter-spacing:0.008px;">Auto Peak</span>
<span class="t" id="t44" style="left:628.63px;top:140.76px;letter-spacing:0.204px;">Balanced</span>
<span class="t" id="t45" style="left:520.63px;top:163.36px;letter-spacing:-0.245px;background:#E0DFE3;padding:0 2px;margin-left:-2px;">PO (8ECC)</span>
<span class="t d" id="t46" style="left:554.84px;top:181.96px;letter-spacing:0.184px;">Show Jitter</span>
<span class="t" id="t47" style="left:554.84px;top:201.86px;letter-spacing:0.245px;">Show PO</span>
<span class="t d" id="t48" style="left:629.44px;top:181.56px;letter-spacing:0.018px;">Instant</span>
<span class="t d" id="t49" style="left:685.53px;top:181.56px;letter-spacing:0.355px;">Average</span>
<span class="t" id="t50" style="left:629.55px;top:201.06px;letter-spacing:-0.150px;">Line</span>
<span class="t" id="t51" style="left:685.72px;top:201.06px;letter-spacing:0.251px;">Vertical</span>
<span class="t" id="t52" style="left:524.03px;top:229.96px;letter-spacing:0.233px;">PO Scale (Left)</span>
<span class="t d" id="t53" style="left:524.80px;top:254.26px;letter-spacing:0.086px;">Jitter Scale (Right)</span>
<span class="t" id="t54" style="left:628.85px;top:228.46px;letter-spacing:0.008px;">Auto Peak</span>
<span class="t d2" id="t55" style="left:628.85px;top:251.66px;letter-spacing:0.008px;">Auto Peak</span>
<span class="t" id="t56" style="left:529.72px;top:283.36px;letter-spacing:0.041px;">Current</span>
<span class="t" id="t57" style="left:533.95px;top:296.76px;letter-spacing:-0.113px;">23127F</span>
<span class="t" id="t58" style="left:594.32px;top:283.36px;letter-spacing:0.119px;">Max LBA</span>
<span class="t" id="t59" style="left:598.88px;top:296.76px;letter-spacing:0.009px;">23127F</span>
<span class="t d" id="t60" style="left:660.45px;top:283.36px;letter-spacing:0.302px;">Jitter Avg</span>
<span class="t d" id="t61" style="left:678.91px;top:296.76px;letter-spacing:-0.591px;">0</span>
<span class="t" id="t62" style="left:581.94px;top:336.96px;color:#FFFFFF;letter-spacing:0.096px;">100% Complete</span>
<span class="t" id="t63" style="left:561.60px;top:366.36px;letter-spacing:0.130px;">Start</span>
<span class="t" id="t64" style="left:680.40px;top:366.36px;letter-spacing:0.257px;">Stop</span>
</div>
</body></html>
